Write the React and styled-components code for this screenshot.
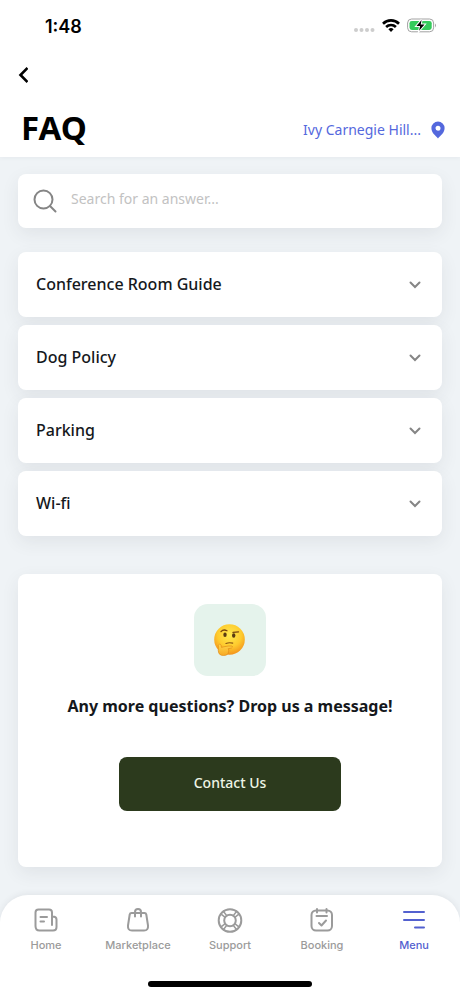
import React, { useState } from 'react';
import styled, { createGlobalStyle } from 'styled-components';

const GlobalStyle = createGlobalStyle`
    * {
        box-sizing: border-box;
    }

    body {
        margin: 0;
        background: #eff3f6;
        font-family: 'Noto Sans', 'Open Sans', sans-serif;
        color: #15181c;
    }

    button, input {
        font-family: inherit;
        color: inherit;
    }
`;

const Screen = styled.div`
    display: flex;
    flex-direction: column;
    min-height: 100vh;
`;

const Header = styled.header`
    background: white;
    box-shadow: 0 1px 4px rgba(60, 80, 100, 0.06);
`;

const StatusBar = styled.div`
    display: flex;
    align-items: center;
    justify-content: space-between;
    height: 52px;
    padding: 0 23px 0 45px;
`;

const Time = styled.time`
    font-family: Inter, sans-serif;
    font-size: 18px;
    font-weight: 600;
    color: black;
`;

const StatusIcons = styled.div`
    display: flex;
    align-items: center;
    gap: 7px;
`;

const BackButton = styled.button`
    display: flex;
    margin: 7px 0 0 11px;
    padding: 7px;
    border: none;
    background: none;
`;

const TitleRow = styled.div`
    display: flex;
    align-items: center;
    justify-content: space-between;
    padding: 13px 15px 5px 21px;
`;

const Title = styled.h1`
    margin: 0;
    font-size: 33px;
    line-height: 48px;
    font-weight: 700;
    color: black;
`;

const LocationButton = styled.button`
    display: flex;
    align-items: center;
    gap: 10px;
    padding: 4px 0 0;
    border: none;
    background: none;
    font-size: 14px;
    line-height: 24px;
    color: #5468dd;
`;

const Main = styled.main`
    flex: 1;
    padding: 17px 18px 28px;
`;

const Card = styled.div`
    border-radius: 8px;
    background: white;
    box-shadow: 0 6px 18px rgba(50, 50, 60, 0.08);
`;

const SearchBox = styled(Card)`
    display: flex;
    align-items: center;
    gap: 13px;
    height: 54px;
    padding: 0 14px;
`;

const SearchLabel = styled.label`
    display: flex;
`;

const SearchInput = styled.input`
    flex: 1;
    min-width: 0;
    padding: 0 0 4px;
    border: none;
    outline: none;
    background: none;
    font-size: 14px;
    line-height: 24px;

    &::placeholder {
        color: #c2c2c2;
        opacity: 1;
    }
`;

const Questions = styled.div`
    display: grid;
    gap: 8px;
    margin: 24px 0 38px;
`;

const QuestionButton = styled.button`
    display: flex;
    align-items: center;
    justify-content: space-between;
    width: 100%;
    height: 65px;
    padding: 0 18px 2px;
    border: none;
    background: none;
    font-size: 16px;
    line-height: 24px;
    font-weight: 500;
    text-align: left;
`;

const Chevron = styled.svg`
    transform: ${({ $open }) => $open ? 'rotate(180deg)' : 'none'};
`;

const Answer = styled.p`
    margin: 0;
    padding: 0 18px 18px;
    font-size: 14px;
    line-height: 24px;
`;

const ContactCard = styled(Card)`
    display: flex;
    flex-direction: column;
    align-items: center;
    padding: 30px 18px 56px;
`;

const EmojiTile = styled.div`
    display: flex;
    align-items: center;
    justify-content: center;
    width: 72px;
    height: 72px;
    border-radius: 14px;
    background: #e5f3ec;
`;

const ContactTitle = styled.h2`
    margin: 18px 0 39px;
    font-size: 16px;
    line-height: 24px;
    font-weight: 700;
`;

const ContactButton = styled.button`
    width: 222px;
    height: 54px;
    padding: 0 18px 2px;
    border: none;
    border-radius: 8px;
    background: #2c3a1d;
    font-size: 14px;
    line-height: 24px;
    font-weight: 500;
    color: #eef5e6;
`;

const BottomBar = styled.footer`
    padding: 11px 0 9px;
    border-radius: 28px 28px 0 0;
    background: white;
    box-shadow: 0 -1px 6px rgba(50, 50, 60, 0.08);
`;

const Tabs = styled.nav`
    display: grid;
    grid-template-columns: repeat(5, 1fr);
`;

const Tab = styled.a`
    display: flex;
    flex-direction: column;
    align-items: center;
    gap: 3px;
    font-family: Inter, sans-serif;
    font-size: 11px;
    line-height: 16px;
    font-weight: 500;
    text-decoration: none;
    color: ${({ $active }) => $active ? '#5361cf' : '#9b9b9b'};
`;

const HomeIndicator = styled.div`
    width: 164px;
    height: 6px;
    margin: 28px auto 0;
    border-radius: 3px;
    background: black;
`;

const questions = ['Conference Room Guide', 'Dog Policy', 'Parking', 'Wi-fi'];

const TabIcon = ({ children }) => (
    <svg width='28' height='28' viewBox='0 0 28 28' fill='none' stroke='currentColor'
        strokeWidth='2' strokeLinecap='round' strokeLinejoin='round' aria-hidden='true'>
        {children}
    </svg>
);

const tabs = [
    {
        name: 'Home',
        icon: (
            <TabIcon>
                <path d='M20 19V6.500Q20 3.500 17 3.500H6.500Q3.500 3.500 3.500 6.500V20Q3.500 24.500 7.500 24.500H21Q24.500 24.500 24.500 21V13.500Q24.500 10.500 20.500 10.500' />
                <path d='M8.500 11h6.500M8.500 15.500h3.500' />
            </TabIcon>
        )
    },
    {
        name: 'Marketplace',
        icon: (
            <TabIcon>
                <path d='M7.500 7H20.500Q22 7 22.300 8.500L24 19.500Q24.500 24.500 20 24.500H8Q3.500 24.500 4 19.500L5.700 8.500Q6 7 7.500 7Z' />
                <path d='M11 10.500V6a3 3 0 0 1 6 0v4.500' />
            </TabIcon>
        )
    },
    {
        name: 'Support',
        icon: (
            <TabIcon>
                <circle cx='14' cy='14.500' r='11.300' />
                <circle cx='14' cy='14.500' r='5.800' />
                <path d='M7.300 5.300l3.500 4.400M4.800 7.800l4.400 3.500M20.700 5.300l-3.500 4.400M23.200 7.800l-4.400 3.500M7.300 23.700l3.500-4.400M4.800 21.200l4.400-3.500M20.700 23.700l-3.500-4.400M23.200 21.200l-4.400-3.500' strokeWidth='1.500' />
            </TabIcon>
        )
    },
    {
        name: 'Booking',
        icon: (
            <TabIcon>
                <rect x='3.500' y='4.500' width='20.500' height='20' rx='4.500' />
                <path d='M9 3v3.500M18.500 3v3.500M8.500 10h10.500' />
                <path d='M11 17l2.500 2.500 4.500-5' />
            </TabIcon>
        )
    },
    {
        name: 'Menu',
        active: true,
        icon: (
            <TabIcon>
                <path d='M4 6h20M4 14h20M15 21.500h9' />
            </TabIcon>
        )
    }
];

const Status = () => (
    <StatusBar>
        <Time>1:48</Time>
        <StatusIcons>
            <svg width='22' height='18' viewBox='0 0 22 18' fill='#cdcdcd' aria-hidden='true'>
                <circle cx='3' cy='13' r='2' />
                <circle cx='8.500' cy='13' r='2' />
                <circle cx='14' cy='13' r='2' />
                <circle cx='19.500' cy='13' r='2' />
            </svg>
            <svg width='18' height='14' viewBox='0 0 18 14' fill='none' stroke='black' strokeWidth='2.600' aria-hidden='true'>
                <path d='M1 4.700a11.400 11.400 0 0 1 16 0' />
                <path d='M4.100 8a7 7 0 0 1 9.800 0' />
                <path d='M9 13l-2.600-2.700a3.700 3.700 0 0 1 5.200 0z' fill='black' stroke='none' />
            </svg>
            <svg width='30' height='16' viewBox='0 0 30 16' aria-hidden='true'>
                <rect x='0.600' y='1' width='26' height='12.800' rx='4' fill='none' stroke='#a2a2a2' />
                <rect x='2.500' y='2.900' width='22.200' height='9' rx='2.300' fill='#35cb5c' />
                <path d='M28 5.600q2 1.800 0 3.800z' fill='#a2a2a2' />
                <path d='M14.600 2L9.500 8.100h3.600l-1 4.700L17.500 6.600h-3.800z' fill='black' stroke='white' strokeWidth='2' paintOrder='stroke' />
            </svg>
        </StatusIcons>
    </StatusBar>
);

const ThinkingFace = () => (
    <svg width='34' height='34' viewBox='0 0 34 34' fill='none' strokeLinecap='round' role='img' aria-label='Thinking face'>
        <defs>
            <radialGradient id='face' cx='0.5' cy='0.35' r='0.65'>
                <stop offset='0' stopColor='#ffe94f' />
                <stop offset='0.6' stopColor='#fecb2e' />
                <stop offset='1' stopColor='#f3921c' />
            </radialGradient>
            <linearGradient id='hand' x1='0' y1='0' x2='0' y2='1'>
                <stop offset='0' stopColor='#ffd84a' />
                <stop offset='1' stopColor='#f7a824' />
            </linearGradient>
        </defs>
        <circle cx='16.500' cy='16.500' r='15.300' fill='url(#face)' />
        <path d='M8 8.600q2.500-2.800 6-.8M20 9.400q3-.2 5.500-.6' stroke='#79460f' strokeWidth='1.300' />
        <ellipse cx='12' cy='11.800' rx='1.700' ry='2.300' fill='#5a3a12' />
        <ellipse cx='20.700' cy='12.500' rx='1.700' ry='2.300' fill='#5a3a12' />
        <path d='M13 20.500q3.200-1.300 6.700-.3' stroke='#8a5413' strokeWidth='1.200' />
        <path d='M5.500 22q1.200-2.500 2.600.2l.4 2.200 2.200-.6q5-1.200 8.200-.8 1.500 1-.4 2l-3.500.8q1.500 1 .5 2.500.2 4.200-5 4.200Q5.500 32.500 5.300 28z' fill='url(#hand)' stroke='#e28b16' strokeWidth='0.700' />
    </svg>
);

const Question = ({ name }) => {
    const [open, setOpen] = useState(false);

    return (
        <Card>
            <QuestionButton type='button' aria-expanded={open} onClick={() => setOpen(!open)}>
                {name}
                <Chevron $open={open} width='18' height='18' viewBox='0 0 18 18' fill='none'
                    stroke='#858585' strokeWidth='2' strokeLinecap='round' aria-hidden='true'>
                    <path d='M4.500 7.500L9 12l4.500-4.500' />
                </Chevron>
            </QuestionButton>
            {open && <Answer>{name}</Answer>}
        </Card>
    );
};

const App = () => (
    <Screen>
        <GlobalStyle />
        <Header>
            <Status />
            <BackButton type='button' aria-label='Back'>
                <svg width='10' height='18' viewBox='0 0 10 18' fill='none' stroke='black' strokeWidth='2.600' aria-hidden='true'>
                    <path d='M9.500 2L2.500 9l7 7' />
                </svg>
            </BackButton>
            <TitleRow>
                <Title>FAQ</Title>
                <LocationButton type='button'>
                    Ivy Carnegie Hill...
                    <svg width='14' height='18' viewBox='0 0 14 18' fill='#5468dd' aria-hidden='true'>
                        <path fillRule='evenodd' d='M7 .5a6.600 6.600 0 0 0-6.600 6.600C.4 12 4.500 14.500 7 17.500c2.500-3 6.600-5.500 6.600-10.400A6.600 6.600 0 0 0 7 .5zM7 4.700a2.500 2.500 0 1 1 0 5 2.500 2.500 0 0 1 0-5z' />
                    </svg>
                </LocationButton>
            </TitleRow>
        </Header>
        <Main>
            <SearchBox as='form' role='search'>
                <SearchLabel htmlFor='search' aria-label='Search'>
                    <svg width='26' height='26' viewBox='0 0 26 26' fill='none' stroke='#858585' strokeWidth='2' strokeLinecap='round' aria-hidden='true'>
                        <circle cx='11.500' cy='11.500' r='9' />
                        <path d='M18 18l5.500 5.500' />
                    </svg>
                </SearchLabel>
                <SearchInput id='search' type='text' placeholder='Search for an answer...' />
            </SearchBox>
            <Questions>
                {questions.map((name) => <Question key={name} name={name} />)}
            </Questions>
            <ContactCard>
                <EmojiTile><ThinkingFace /></EmojiTile>
                <ContactTitle>Any more questions? Drop us a message!</ContactTitle>
                <ContactButton type='button'>Contact Us</ContactButton>
            </ContactCard>
        </Main>
        <BottomBar>
            <Tabs>
                {tabs.map(({ name, icon, active }) => (
                    <Tab key={name} href='#' $active={active} aria-current={active ? 'page' : undefined}>
                        {icon}
                        {name}
                    </Tab>
                ))}
            </Tabs>
            <HomeIndicator />
        </BottomBar>
    </Screen>
);

export default App;
